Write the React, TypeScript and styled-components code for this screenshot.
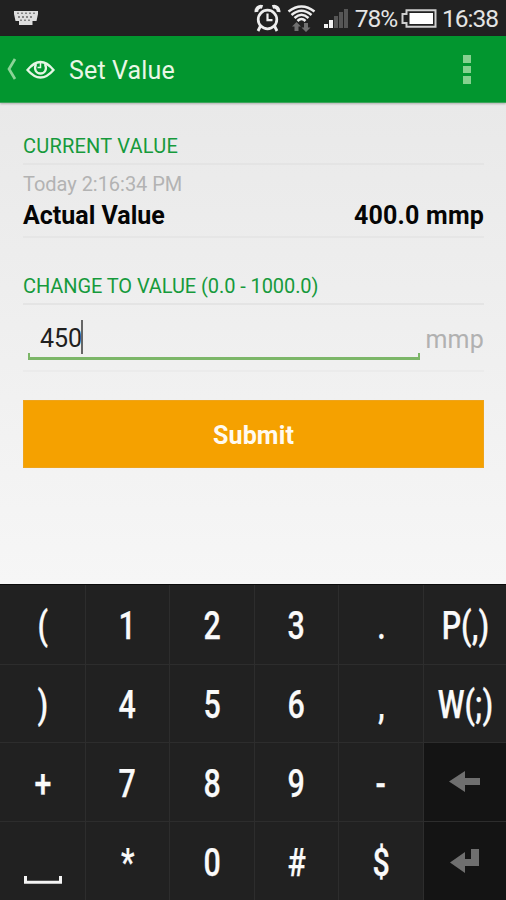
import React from "react";
import styled, { createGlobalStyle } from "styled-components";

const GlobalStyle = createGlobalStyle`
  * { box-sizing: border-box; }
  body { margin: 0; background: #f4f4f4; font-family: Roboto, "Liberation Sans", sans-serif; }
`;

const Screen = styled.div`
  width: 506px;
  height: 900px;
  display: flex;
  flex-direction: column;
  overflow: hidden;
`;

const StatusBar = styled.div`
  height: 36px;
  flex: none;
  padding-right: 8px;
  background: #212121;
  display: flex;
  align-items: center;
  color: #e4e4e4;
`;

const StatusIcon = styled.svg<{ $gap?: number }>`
  flex: none;
  margin-left: ${(p) => p.$gap ?? 0}px;
`;

const StatusText = styled.span<{ $gap: number; $spacing: number }>`
  margin-left: ${(p) => p.$gap}px;
  font-size: 24.5px;
  line-height: 36px;
  padding-top: 2px;
  letter-spacing: ${(p) => p.$spacing}px;
  white-space: nowrap;
`;

const Spacer = styled.div`
  flex: 1;
`;

const ActionBar = styled.header`
  height: 67px;
  flex: none;
  display: flex;
  align-items: center;
  background: #02962f;
  border-bottom: 1px solid #3ba45a;
  box-shadow: 0 1px 2px rgba(0, 0, 0, 0.25);
  z-index: 1;
`;

const Title = styled.h1`
  margin: 0 0 0 14px;
  padding-top: 3px;
  flex: 1;
  font-size: 25px;
  font-weight: 400;
  line-height: 30px;
  letter-spacing: 0.15px;
  color: #e9f7e6;
`;

const Overflow = styled.div`
  width: 8px;
  margin-right: 35px;
  padding-top: 1px;
  display: grid;
  gap: 3px;
`;

const Dot = styled.span`
  height: 7.5px;
  background: #86d18f;
`;

const Content = styled.main`
  height: 481px;
  flex: none;
  padding: 0 22px 0 23px;
  background: linear-gradient(#e9e9e9, #f6f6f6);
`;

const SectionTitle = styled.h2<{ $height: number; $spacing: number }>`
  height: ${(p) => p.$height}px;
  margin: 0;
  padding-bottom: 5px;
  display: flex;
  align-items: flex-end;
  border-bottom: 2px solid #e4e4e4;
  color: #169a3c;
  font-size: 20px;
  font-weight: 400;
  line-height: 24px;
  letter-spacing: ${(p) => p.$spacing}px;
`;

const Reading = styled.section`
  height: 73px;
  padding-top: 7px;
  border-bottom: 2px solid #e6e6e6;
`;

const Timestamp = styled.div`
  color: #b3b3b3;
  font-size: 20px;
  line-height: 25px;
  letter-spacing: -0.03px;
`;

const ReadingRow = styled.div`
  display: flex;
  justify-content: space-between;
  color: #050505;
  font-size: 25px;
  font-weight: 700;
  line-height: 38px;
`;

const ReadingLabel = styled.span`
  letter-spacing: 0;
`;

const ReadingValue = styled.span`
  letter-spacing: 0.2px;
`;

const InputRow = styled.section`
  height: 67px;
  padding-left: 5px;
  display: flex;
  border-bottom: 2px solid #ebebeb;
`;

const Field = styled.div`
  width: 392px;
  height: 56px;
  display: flex;
  flex-direction: column;
`;

const FieldText = styled.div`
  height: 48px;
  padding: 15px 0 0 12px;
  display: flex;
  color: #202020;
  font-size: 25px;
  line-height: 38px;
`;

const Caret = styled.span`
  width: 2px;
  height: 34px;
  margin-left: -1px;
  background: #666;
`;

const Underline = styled.div`
  height: 7px;
  flex: none;
  border: solid #7cb668;
  border-width: 0 2px 3px;
`;

const Unit = styled.span`
  flex: 1;
  padding-top: 16px;
  text-align: right;
  color: #b1b1b1;
  font-size: 25px;
  line-height: 37px;
  letter-spacing: 0.2px;
`;

const Submit = styled.button`
  display: block;
  width: 461px;
  height: 68px;
  margin-top: 28px;
  padding: 4px 0 0;
  border: 1px solid #eea41c;
  background: #f5a100;
  color: #fffaf0;
  font: 700 25px/30px Roboto, sans-serif;
  letter-spacing: 0.15px;
`;

const Keyboard = styled.div`
  flex: 1;
  display: grid;
  grid-template-columns: 86px 84px 85px 84px 85px 82px;
  grid-template-rows: 80px 78px 79px 78px;
  background: #212121;
  border-top: 1px solid #0b0b0b;
`;

const Key = styled.div<{ $dark?: boolean }>`
  display: flex;
  align-items: center;
  justify-content: center;
  overflow: hidden;
  background: ${(p) => (p.$dark ? "#141414" : "#212121")};
  border-right: 1px solid #2d2d2d;
  border-bottom: 1px solid #2d2d2d;

  &:nth-child(6n) {
    border-right: 0;
  }

  &:nth-child(n + 19) {
    border-bottom: 0;
  }
`;

const KeyLabel = styled.span`
  font-size: 39px;
  font-weight: 500;
  line-height: 46px;
  padding-top: 3px;
  color: #fafafa;
  white-space: nowrap;
  transform: scaleX(0.78);
  -webkit-text-stroke: 0.25px #fafafa;
`;

const KeyboardIcon = () => (
  <StatusIcon $gap={14} width="24" height="16" viewBox="0 0 24 16">
    <path d="M0 1H24V4L22.500 11H18.500V15H5V11H1.500L0 4Z" fill="#dedede" />
    <path d="M4 2.500V4M8 2.500V4M12 2.500V4M16 2.500V4M20 2.500V4M5 6V8M9 6V8M13 6V8M17 6V8M7 9.500V11M11 9.500V11M15 9.500V11" stroke="#4a4a4a" strokeWidth="1.200" />
  </StatusIcon>
);

const AlarmIcon = () => (
  <StatusIcon width="27" height="30" viewBox="0 0 27 30" fill="none" stroke="#eee">
    <circle cx="13.5" cy="16.5" r="9.300" strokeWidth="2.7" />
    <path d="M13.5 10.500V17.200H18.500" strokeWidth="2.2" />
    <path d="M2.500 9A4.500 4.500 0 0 1 8.500 4M18.500 4A4.500 4.500 0 0 1 24.500 9" strokeWidth="3.8" />
    <path d="M6.500 23L4 28M20.5 23L23 28" strokeWidth="2.8" />
  </StatusIcon>
);

const WifiIcon = () => (
  <StatusIcon $gap={6} width="29" height="30" viewBox="0 0 29 30" fill="none">
    <path d="M1.500 8.500Q14.500 -1.500 27.500 8.500M4.500 12Q14.500 3.500 24.500 12M7.500 15Q14.500 8.500 21.500 15M10.500 18Q14.500 14 18.500 18" stroke="#ededed" strokeWidth="2.5" />
    <path d="M9.500 19L14 23.500H11.500V28H7.500V23.500H5ZM19 29L14.500 24.500H17V20H21V24.500H23.500Z" fill="#707070" />
  </StatusIcon>
);

const SignalIcon = () => (
  <StatusIcon $gap={7} width="26" height="22" viewBox="0 0 26 22">
    <path d="M1 17H5V21H1ZM6 13H10V21H6Z" fill="#f2f2f2" />
    <path d="M11 9H15V21H11ZM16 5H20V21H16ZM21 2H25V21H21Z" fill="#565656" />
  </StatusIcon>
);

const BatteryIcon = () => (
  <StatusIcon $gap={4} width="36" height="19" viewBox="0 0 36 19">
    <path d="M5.500 1.200H34.500V17.800H5.500V14H1.500V5H5.500Z" fill="none" stroke="#cfcfcf" strokeWidth="2" />
    <path d="M8.500 4H32V15H8.500Z" fill="#fff" />
  </StatusIcon>
);

const BackIcon = () => (
  <StatusIcon $gap={6} width="11" height="22" viewBox="0 0 11 22">
    <path d="M9 1L3 11L9 21" fill="none" stroke="#8bd497" strokeWidth="2.7" />
  </StatusIcon>
);

const EyeIcon = () => (
  <StatusIcon $gap={9} width="29" height="20" viewBox="0 0 29 20" fill="none" stroke="#e5f6e5" strokeWidth="2.300">
    <path d="M1.500 11Q8 3 14.500 3T27.500 11Q21 18.500 14.500 18.500T1.500 11Z" />
    <path d="M10 5C7.500 11 10.500 14.500 14.500 14.500S21.500 11 19 5" />
    <path d="M14.500 4V8.500H11.500" strokeWidth="1.500" />
  </StatusIcon>
);

const SpaceIcon = () => (
  <svg width="40" height="78" viewBox="0 0 40 78">
    <path d="M2.500 54V60.300H37.500V54" fill="none" stroke="#f4f4f4" strokeWidth="3" />
  </svg>
);

const BackspaceIcon = () => (
  <svg width="32" height="24" viewBox="0 0 32 24">
    <path d="M0 11.500L16 1V8H31V15H16V22Z" fill="#6f6f6f" />
  </svg>
);

const EnterIcon = () => (
  <svg width="32" height="28" viewBox="0 0 32 28">
    <path d="M1 15.500L16 5V12H22V2H30V19H16V26Z" fill="#6f6f6f" />
  </svg>
);

const keys = [
  "(", "1", "2", "3", ".", "P(,)",
  ")", "4", "5", "6", ",", "W(;)",
  "+", "7", "8", "9", "-", "backspace",
  "space", "*", "0", "#", "$", "enter",
];

const keyIcons: Record<string, React.ReactNode> = {
  space: <SpaceIcon />,
  backspace: <BackspaceIcon />,
  enter: <EnterIcon />,
};

export default function App() {
  return (
    <Screen>
      <GlobalStyle />
      <StatusBar>
        <KeyboardIcon />
        <Spacer />
        <AlarmIcon />
        <WifiIcon />
        <SignalIcon />
        <StatusText $gap={6} $spacing={-1.1}>78%</StatusText>
        <BatteryIcon />
        <StatusText $gap={5} $spacing={-1}>16:38</StatusText>
      </StatusBar>
      <ActionBar>
        <BackIcon />
        <EyeIcon />
        <Title>Set Value</Title>
        <Overflow>
          <Dot />
          <Dot />
          <Dot />
        </Overflow>
      </ActionBar>
      <Content>
        <SectionTitle $height={62} $spacing={0.22}>CURRENT VALUE</SectionTitle>
        <Reading>
          <Timestamp>Today 2:16:34 PM</Timestamp>
          <ReadingRow>
            <ReadingLabel>Actual Value</ReadingLabel>
            <ReadingValue>400.0 mmp</ReadingValue>
          </ReadingRow>
        </Reading>
        <SectionTitle $height={67} $spacing={-0.08}>CHANGE TO VALUE (0.0 - 1000.0)</SectionTitle>
        <InputRow>
          <Field>
            <FieldText>
              450
              <Caret />
            </FieldText>
            <Underline />
          </Field>
          <Unit>mmp</Unit>
        </InputRow>
        <Submit>Submit</Submit>
      </Content>
      <Keyboard>
        {keys.map((key) => (
          <Key key={key} $dark={key === "backspace" || key === "enter"}>
            {keyIcons[key] ?? <KeyLabel>{key}</KeyLabel>}
          </Key>
        ))}
      </Keyboard>
    </Screen>
  );
}
